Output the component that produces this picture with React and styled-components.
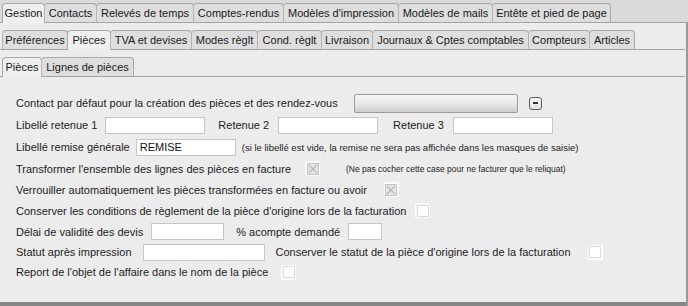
import styled, { createGlobalStyle } from "styled-components";

const GlobalStyle = createGlobalStyle`
	html, body {
		margin: 0;
		padding: 0;
		background: #dadada;
	}
	body {
		font-family: "Liberation Sans", Arial, Helvetica, sans-serif;
		font-size: 11px;
		color: #1c1c1c;
	}
`;

// [label, width]
const topTabs = [
	["Gestion", 43],
	["Contacts", 53],
	["Relevés de temps", 98],
	["Comptes-rendus", 91],
	["Modèles d'impression", 116],
	["Modèles de mails", 95],
	["Entête et pied de page", 119],
];

const subTabs = [
	["Préférences", 66],
	["Pièces", 44],
	["TVA et devises", 82],
	["Modes règlt", 67],
	["Cond. règlt", 65],
	["Livraison", 52],
	["Journaux & Cptes comptables", 157],
	["Compteurs", 62],
	["Articles", 46],
];

const pieceTabs = [
	["Pièces", 40],
	["Lignes de pièces", 93],
];

const Tabs = ({ items, active, top }) => (
	<TabRow $top={top}>
		{items.map(([t, w]) => (
			<Tab key={t} $w={w} $active={t === active}>
				{t}
			</Tab>
		))}
	</TabRow>
);

const Check = ({ crossed }) => (
	<CheckWrap>
		<CheckBox>
			{crossed && (
				<svg width="12" height="12" viewBox="0 0 12 12">
					<rect x="0.5" y="0.5" width="11" height="11" fill="#e6e6e6" stroke="#c4c4c4" />
					<path d="M2 2 L10 10 M10 2 L2 10" stroke="#b8b8b8" strokeWidth="1.2" />
				</svg>
			)}
		</CheckBox>
	</CheckWrap>
);

const App = () => {
	return (
		<Page>
			<GlobalStyle />
			<Tabs items={topTabs} active="Gestion" top />
			<Panel>
				<Tabs items={subTabs} active="Pièces" />
				<Tabs items={pieceTabs} active="Pièces" />
				<Content>
					<Row $h={22}>
						<Label>Contact par défaut pour la création des pièces et des rendez-vous</Label>
						<Select $ml={16} />
						<MinusBtn $ml={11}>
							<span />
						</MinusBtn>
					</Row>
					<Row $h={22}>
						<Label>Libellé retenue 1</Label>
						<Input $w={100} $ml={8} />
						<Label $ml={13}>Retenue 2</Label>
						<Input $w={100} $ml={9} />
						<Label $ml={15}>Retenue 3</Label>
						<Input $w={100} $ml={9} />
					</Row>
					<Row $h={22}>
						<Label>Libellé remise générale</Label>
						<Input $w={100} $ml={6} defaultValue="REMISE" />
						<Note $ml={6} $size={9.5}>
							(si le libellé est vide, la remise ne sera pas affichée dans les masques de saisie)
						</Note>
					</Row>
					<Row $h={21}>
						<Label>Transformer l'ensemble des lignes des pièces en facture</Label>
						<Gap $w={14} />
						<Check crossed />
						<Note $ml={26} $size={8.5}>
							(Ne pas cocher cette case pour ne facturer que le reliquat)
						</Note>
					</Row>
					<Row $h={21}>
						<Label>Verrouiller automatiquement les pièces transformées en facture ou avoir</Label>
						<Gap $w={17} />
						<Check crossed />
					</Row>
					<Row $h={21}>
						<Label>Conserver les conditions de règlement de la pièce d'origine lors de la facturation</Label>
						<Gap $w={9} />
						<Check />
					</Row>
					<Row $h={21}>
						<Label>Délai de validité des devis</Label>
						<Input $w={73} $ml={8} />
						<Label $ml={12}>% acompte demandé</Label>
						<Input $w={34} $ml={8} />
					</Row>
					<Row $h={20}>
						<Label>Statut après impression</Label>
						<Input $w={122} $ml={11} />
						<Label $ml={11}>Conserver le statut de la pièce d'origine lors de la facturation</Label>
						<Gap $w={17} />
						<Check />
					</Row>
					<Row $h={20}>
						<Label>Report de l'objet de l'affaire dans le nom de la pièce</Label>
						<Gap $w={13} />
						<Check />
					</Row>
				</Content>
			</Panel>
		</Page>
	);
};

export default App;

const Page = styled.div`
	width: 688px;
	height: 306px;
	overflow: hidden;
	background: #dadada;
	display: flex;
	flex-direction: column;
`;

const TabRow = styled.div`
	display: flex;
	align-items: flex-end;
	box-sizing: border-box;
	height: ${(p) => (p.$top ? 23 : 27)}px;
	padding-left: 2px;
	border-bottom: 1px solid #a4a4a4;
	margin-right: ${(p) => (p.$top ? 0 : 1)}px;
`;

const Tab = styled.div`
	position: relative;
	box-sizing: border-box;
	width: ${(p) => p.$w}px;
	height: ${(p) => (p.$active ? 20 : 19)}px;
	line-height: 19px;
	text-align: center;
	margin-bottom: ${(p) => (p.$active ? -1 : 0)}px;
	background: ${(p) => (p.$active ? "#efefef" : "#dedede")};
	border: 1px solid #a8a8a8;
	border-bottom: none;
	border-left-color: ${(p) => (p.$active ? "#a8a8a8" : "#b4b4b4")};
	border-radius: 4px 4px 0 0;
	color: #1a1a1a;
	white-space: nowrap;
	font-size: 11px;
	& + & {
		margin-left: -1px;
	}
`;

const Panel = styled.div`
	flex: 1;
	display: flex;
	flex-direction: column;
	background: #ececec;
	border-right: 2px solid #9a9a9a;
`;

const Content = styled.div`
	flex: 1;
	padding-left: 16px;
	padding-top: 15px;
	border-bottom: 4px solid #868686;
	background: #ececec;
`;

const Row = styled.div`
	display: flex;
	align-items: center;
	height: ${(p) => p.$h}px;
	white-space: nowrap;
`;

const Label = styled.span`
	margin-left: ${(p) => p.$ml || 0}px;
	font-size: 11px;
	color: #1c1c1c;
`;

const Note = styled.span`
	margin-left: ${(p) => p.$ml || 0}px;
	font-size: ${(p) => p.$size}px;
	color: #1c1c1c;
`;

const Gap = styled.span`
	width: ${(p) => p.$w}px;
	flex: none;
`;

const Input = styled.input`
	box-sizing: border-box;
	width: ${(p) => p.$w}px;
	height: 17px;
	margin: 0 0 0 ${(p) => p.$ml || 0}px;
	padding: 0 3px;
	border: 1px solid #c6c6c6;
	background: #ffffff;
	font-family: "Liberation Sans", Arial, sans-serif;
	font-size: 11px;
	color: #111;
	outline: none;
`;

const Select = styled.div`
	box-sizing: border-box;
	width: 164px;
	height: 19px;
	margin-left: ${(p) => p.$ml}px;
	border: 1px solid #9c9c9c;
	border-radius: 2px;
	background: linear-gradient(#f7f7f7, #e6e6e6 55%, #cfcfcf);
`;

const MinusBtn = styled.div`
	box-sizing: border-box;
	width: 13px;
	height: 13px;
	margin-left: ${(p) => p.$ml}px;
	border: 1px solid #5a5a5a;
	border-radius: 3px;
	background: linear-gradient(#fafafa, #e0e0e0);
	display: flex;
	align-items: center;
	justify-content: center;
	& > span {
		width: 5px;
		height: 2px;
		background: #333;
	}
`;

const CheckWrap = styled.span`
	flex: none;
	width: 15px;
	height: 15px;
	background: #fbfbfb;
	display: flex;
	align-items: center;
	justify-content: center;
`;

const CheckBox = styled.span`
	box-sizing: border-box;
	width: 12px;
	height: 12px;
	border: 1px solid #dadada;
	background: #ffffff;
	display: flex;
	& > svg {
		margin: -1px;
	}
`;
